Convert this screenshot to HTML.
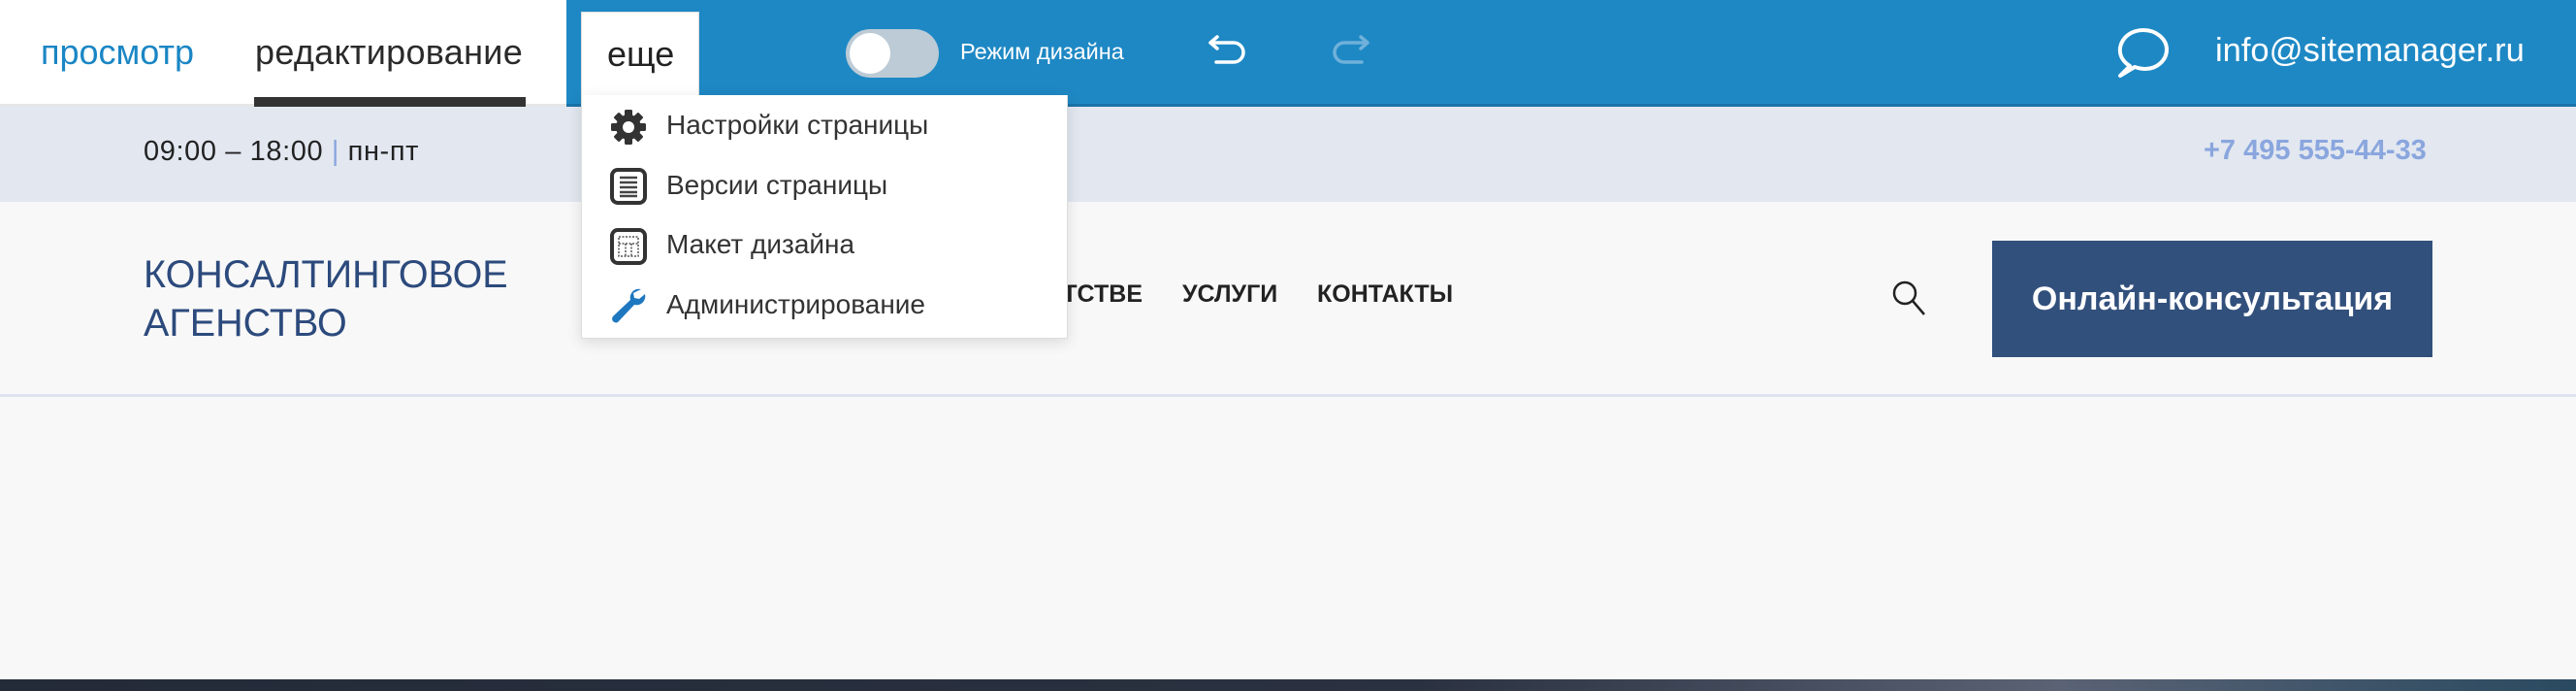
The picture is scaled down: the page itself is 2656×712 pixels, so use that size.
<!DOCTYPE html>
<html><head><meta charset="utf-8"><style>
*{margin:0;padding:0;box-sizing:border-box}
body{width:2656px;height:712px;overflow:hidden;background:#f8f8f8;font-family:"Liberation Sans","Noto Sans CJK SC",sans-serif;position:relative}
.a{position:absolute;white-space:nowrap}
</style></head><body>
<div class="a" style="left:0;top:0;width:2656px;height:110px;background:#1e88c4;border-bottom:3px solid #1a73a8"></div>
<div class="a" style="left:0;top:0;width:584px;height:110px;background:#fff;border-bottom:3px solid #e6e6e6"></div>
<div class="a" style="left:42px;top:33px;font-size:36px;color:#1a86c4">просмотр</div>
<div class="a" style="left:263px;top:33px;font-size:36px;color:#2a2a2a;letter-spacing:0.3px">редактирование</div>
<div class="a" style="left:262px;top:100px;width:280px;height:10px;background:#333"></div>
<div class="a" style="left:599px;top:12px;width:122px;height:100px;background:#fff;border:1px solid #ddd;border-bottom:none"></div>
<div class="a" style="left:626px;top:35px;font-size:36px;color:#222">еще</div>
<div class="a" style="left:872px;top:30px;width:96px;height:50px;border-radius:25px;background:#bccbd6"></div>
<div class="a" style="left:876px;top:34px;width:42px;height:42px;border-radius:50%;background:#fff"></div>
<div class="a" style="left:990px;top:40px;font-size:23.5px;color:#fff">Режим дизайна</div>
<svg class="a" style="left:1244px;top:36px" width="44" height="34" viewBox="0 0 44 34" fill="none" stroke="#fff" stroke-width="3.5" stroke-linecap="round" stroke-linejoin="round"><path d="M4 8h24a10 10 0 0 1 0 20H10M11 2L4 8l7 6"/></svg>
<svg class="a" style="left:1370px;top:36px" width="44" height="34" viewBox="0 0 44 34" fill="none" stroke="#6fb1da" stroke-width="3.5" stroke-linecap="round" stroke-linejoin="round"><path d="M40 8H16a10 10 0 0 0 0 20h18M33 2l7 6-7 6"/></svg>
<svg class="a" style="left:2182px;top:28px" width="56" height="54" viewBox="0 0 56 54" fill="none" stroke="#fff" stroke-width="4" stroke-linejoin="round"><path d="M14 40C6 35 3 28 4 21 6 10 16 3 28 3c13 0 24 9 24 20s-10 20-22 20c-4 0-8-1-11-2L4 50z"/></svg>
<div class="a" style="left:2284px;top:33px;font-size:34.5px;color:#fff">info@sitemanager.ru</div>
<div class="a" style="left:0;top:110px;width:2656px;height:98px;background:#e2e7f0"></div>
<div class="a" style="left:148px;top:140px;font-size:29px;color:#222;letter-spacing:0.6px">09:00 – 18:00 <span style="color:#8aa6de">|</span> пн-пт</div>
<div class="a" style="left:2272px;top:139px;font-size:29px;color:#8aa6de;font-weight:bold">+7 495 555-44-33</div>
<div class="a" style="left:0;top:406px;width:2656px;height:3px;background:#dde3ef"></div>
<div class="a" style="left:148px;top:258px;font-size:39.5px;line-height:50px;color:#2c4a7c">КОНСАЛТИНГОВОЕ<br>АГЕНСТВО</div>
<div class="a" style="left:900px;top:289px;width:278px;text-align:right;font-size:25px;font-weight:bold;color:#222">ОБ АГЕНТСТВЕ</div>
<div class="a" style="left:1219px;top:289px;font-size:25px;font-weight:bold;color:#222">УСЛУГИ</div>
<div class="a" style="left:1358px;top:289px;font-size:25px;font-weight:bold;color:#222">КОНТАКТЫ</div>
<svg class="a" style="left:1950px;top:288px" width="40" height="38" viewBox="0 0 40 38" fill="none" stroke="#222" stroke-width="2.5"><circle cx="14" cy="14" r="11"/><path d="M22 22l12 14"/></svg>
<div class="a" style="left:2054px;top:248px;width:454px;height:120px;background:#32507c;color:#fff;font-size:34px;font-weight:bold;text-align:center;line-height:120px">Онлайн-консультация</div>
<div class="a" style="left:0;top:700px;width:2656px;height:12px;background:linear-gradient(90deg,#232a38 0%,#2a3140 55%,#5a6274 80%,#2a4a60 100%)"></div>
<div class="a" style="left:599px;top:98px;width:502px;height:251px;background:#fff;border:1px solid #ddd;border-top:none;box-shadow:0 4px 14px rgba(0,0,0,.12)"></div>
<div class="a" style="left:600px;top:98px;width:120px;height:4px;background:#fff"></div>
<svg class="a" style="left:628px;top:111px" width="40" height="40" viewBox="0 0 40 40"><g fill="#333"><circle cx="20" cy="20" r="13"/><rect x="16" y="2" width="8" height="36" rx="1.5"/><rect x="16" y="2" width="8" height="36" rx="1.5" transform="rotate(45 20 20)"/><rect x="16" y="2" width="8" height="36" rx="1.5" transform="rotate(90 20 20)"/><rect x="16" y="2" width="8" height="36" rx="1.5" transform="rotate(135 20 20)"/></g><circle cx="20" cy="20" r="6" fill="#fff"/></svg>
<div class="a" style="left:687px;top:113px;font-size:28px;color:#333">Настройки страницы</div>
<svg class="a" style="left:629px;top:173px" width="38" height="38" viewBox="0 0 38 38"><rect x="2" y="2" width="34" height="34" rx="6" fill="none" stroke="#333" stroke-width="4"/><g stroke="#444" stroke-width="2.5"><path d="M10 10h18M10 15h18M10 20h18M10 25h18M10 29h18"/></g></svg>
<div class="a" style="left:687px;top:175px;font-size:28px;color:#333">Версии страницы</div>
<svg class="a" style="left:629px;top:235px" width="38" height="38" viewBox="0 0 38 38"><rect x="2" y="2" width="34" height="34" rx="6" fill="none" stroke="#333" stroke-width="4"/><g fill="none" stroke="#555" stroke-width="1.5" stroke-dasharray="2 1.5"><rect x="9" y="9" width="20" height="20"/><path d="M9 16h20M16 16v13M22 16v13"/></g></svg>
<div class="a" style="left:687px;top:236px;font-size:28px;color:#333">Макет дизайна</div>
<svg class="a" style="left:628px;top:295px" width="40" height="40" viewBox="0 0 40 40"><path d="M33 3a9 9 0 0 0-11 11L4 31a4 4 0 0 0 5 6l17-18a9 9 0 0 0 11-11l-6 5-5-1-1-5z" fill="#1e78c0"/></svg>
<div class="a" style="left:687px;top:298px;font-size:28px;color:#333">Администрирование</div>
</body></html>
